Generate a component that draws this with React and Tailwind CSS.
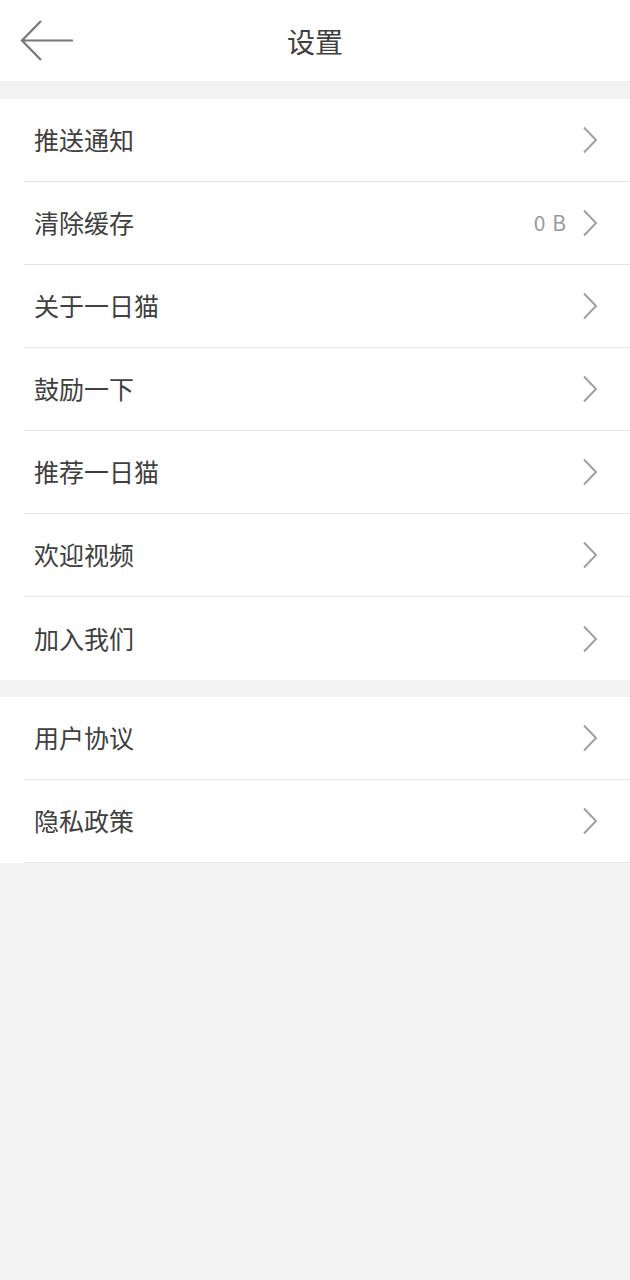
import React from 'react';

const font = { fontFamily: '"Noto Sans CJK SC", "Noto Sans", sans-serif' };

const Chevron = () => (
  <svg width="16" height="28" viewBox="0 0 16 28" className="text-[#a0a0a0]">
    <path d="M2 1.5 L14 14 L2 26.5" fill="none" stroke="currentColor" strokeWidth="2" />
  </svg>
);

const Row = ({ label, value, last }) => (
  <div className="flex h-[83px] bg-white">
    <div className={`ml-6 flex flex-1 items-center pl-[10px] pr-[32px] ${last ? '' : 'border-b border-[#e5e5e5]'}`}>
      <span className="flex-1 text-[25px] text-[#404040]">{label}</span>
      {value && <span className="mr-[15px] text-[21px] tracking-[1px] text-[#9a9a9a]">{value}</span>}
      <Chevron />
    </div>
  </div>
);

const groupA = ['推送通知', '清除缓存', '关于一日猫', '鼓励一下', '推荐一日猫', '欢迎视频', '加入我们'];
const groupB = ['用户协议', '隐私政策'];

export default function App() {
  return (
    <div className="min-h-[1280px] w-[630px] bg-[#f3f3f3]" style={font}>
      {/* Header */}
      <div className="relative flex h-[81px] items-center justify-center bg-white">
        <svg className="absolute left-[20px] top-[19px]" width="56" height="44" viewBox="0 0 56 44">
          <path d="M21 2 L2 21.5 L21 41 M2 21.5 L53 21.5" fill="none" stroke="#777" strokeWidth="2.2" />
        </svg>
        <span className="text-[28px] text-[#404040]">设置</span>
      </div>

      <div className="mt-[18px]">
        {groupA.map((label, i) => (
          <Row key={label} label={label} value={label === '清除缓存' ? '0 B' : null} last={i === groupA.length - 1} />
        ))}
      </div>

      <div className="mt-[17px]">
        {groupB.map((label) => (
          <Row key={label} label={label} />
        ))}
      </div>
    </div>
  );
}
